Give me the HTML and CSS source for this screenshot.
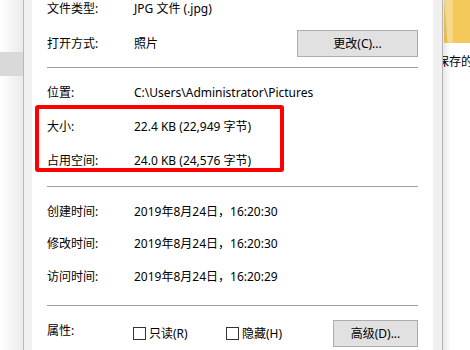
FILE: index.html
```html
<!DOCTYPE html>
<html lang="zh-CN">
<head>
    <meta charset="UTF-8">
    <title>属性</title>
    <link rel="stylesheet" href="styles.css">
</head>
<body>
    <div class="desktop">
        <div class="nav-pane">
            <div class="nav-selected"></div>
        </div>

        <div class="dialog">
            <div class="tab-page">
                <div class="row first">
                    <span class="label">文件类型:</span>
                    <span class="value">JPG 文件 (.jpg)</span>
                </div>
                <div class="row with-button open-with">
                    <span class="label">打开方式:</span>
                    <span class="value">照片</span>
                    <button class="btn change">更改(C)...</button>
                </div>
                <div class="sep sep-1"></div>

                <div class="row location">
                    <span class="label">位置:</span>
                    <span class="value">C:\Users\Administrator\Pictures</span>
                </div>

                <div class="mark">
                    <div class="row">
                        <span class="label">大小:</span>
                        <span class="value">22.4 KB (22,949 字节)</span>
                    </div>
                    <div class="row">
                        <span class="label">占用空间:</span>
                        <span class="value">24.0 KB (24,576 字节)</span>
                    </div>
                </div>
                <div class="sep sep-2"></div>

                <div class="times">
                    <div class="row">
                        <span class="label">创建时间:</span>
                        <span class="value">2019年8月24日，16:20:30</span>
                    </div>
                    <div class="row">
                        <span class="label">修改时间:</span>
                        <span class="value">2019年8月24日，16:20:30</span>
                    </div>
                    <div class="row">
                        <span class="label">访问时间:</span>
                        <span class="value">2019年8月24日，16:20:29</span>
                    </div>
                </div>
                <div class="sep sep-3"></div>

                <div class="row with-button attrs">
                    <span class="label">属性:</span>
                    <label class="check readonly"><span class="box"></span>只读(R)</label>
                    <label class="check"><span class="box"></span>隐藏(H)</label>
                    <button class="btn advanced">高级(D)...</button>
                </div>
            </div>
        </div>

        <div class="explorer">
            <div class="folder">
                <div class="folder-front"></div>
            </div>
            <div class="file-name">保存的</div>
        </div>
    </div>
</body>
</html>
```

FILE: styles.css
```css
* { box-sizing: border-box; }
body { margin: 0; background: #fff; font-family: "Noto Sans", "Noto Sans CJK SC", sans-serif; font-size: 12px; color: #000; overflow: hidden; }
.desktop { display: flex; height: 350px; }

.nav-pane { width: 23px; flex: none; background: linear-gradient(to right, #fff, #ebebeb); padding-top: 52px; }
.nav-selected { height: 24px; background: #d9d9d9; }

.dialog { width: 420px; flex: none; background: #f0f0f0; border-left: 1px solid #b9b9b9; border-right: 1px solid #b4b4b4; padding: 0 9px 0 8px; }
.tab-page { background: #fff; height: 100%; padding: 0 15px; display: flex; flex-direction: column; }

.row { display: flex; align-items: center; height: 18px; line-height: 18px; white-space: nowrap; }
.label { width: 87px; flex: none; }
.row.with-button { height: 27px; }
.open-with { margin-top: 12px; }
.location { margin-top: 16px; }

.btn { margin-left: auto; height: 27px; background: #e1e1e1; border: 1px solid #adadad; font: inherit; color: #000; padding: 0; }
.change { width: 121px; }
.advanced { width: 85px; }

.sep { height: 1px; background: #a0a0a0; }
.sep-1 { margin-top: 10px; }
.sep-2 { margin-top: 14px; }
.sep-3 { margin-top: 19px; }

.mark { margin: 3px 0 0 -12px; width: 249px; border: 4px solid #f00; border-radius: 3px; padding: 11px 0 0 8px; height: 67px; display: flex; flex-direction: column; gap: 20px; }
.mark .row { height: 14px; line-height: 14px; }

.times { margin-top: 16px; display: flex; flex-direction: column; gap: 14px; }
.times .row:last-child { margin-top: 1px; }

.attrs { margin-top: 14px; }
.attrs .label { align-self: flex-start; line-height: 22px; }
.check { display: flex; align-items: center; gap: 3px; }
.check.readonly { width: 93px; margin-left: -1px; }
.box { width: 13px; height: 13px; border: 1px solid #333; background: #fff; }

.explorer { flex: 1; position: relative; overflow: hidden; background: #fff; }
.explorer::before { content: ""; position: absolute; left: 0; top: 0; bottom: 0; width: 8px; background: linear-gradient(to right, rgba(0,0,0,0.09), rgba(0,0,0,0)); z-index: 1; }
.folder { margin-left: 1px; height: 43px; background: #f2c95a; position: relative; }
.folder-front { position: absolute; left: 0; top: 0; bottom: 0; width: 9px; background: linear-gradient(to right, #fbe7ae, #f7d57b); clip-path: polygon(0 0, 100% 0, 100% 100%, 40% 100%); }
.file-name { margin: 12px 0 0 -6px; line-height: 14px; white-space: nowrap; }
```
